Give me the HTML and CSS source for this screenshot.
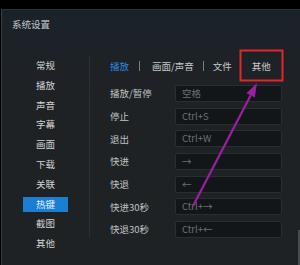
FILE: index.html
```html
<!DOCTYPE html>
<html lang="zh-CN">
<head>
  <meta charset="UTF-8">
  <title>系统设置</title>
  <link rel="stylesheet" href="styles.css">
</head>
<body>
  <div class="window">
    <div class="title">系统设置</div>

    <div class="main">
      <ul class="sidebar">
        <li>常规</li>
        <li>播放</li>
        <li>声音</li>
        <li>字幕</li>
        <li>画面</li>
        <li>下载</li>
        <li>关联</li>
        <li class="active"><span>热键</span></li>
        <li>截图</li>
        <li>其他</li>
      </ul>

      <div class="content">
        <div class="tabs">
          <span class="tab current">播放</span>
          <span class="sep wide"></span>
          <span class="tab">画面/声音</span>
          <span class="sep"></span>
          <span class="tab">文件</span>
          <span class="sep last"></span>
          <span class="tab">其他</span>
        </div>

        <div class="keys">
          <div class="row"><span class="label">播放/暂停</span><span class="key">空格</span></div>
          <div class="row"><span class="label">停止</span><span class="key">Ctrl+S</span></div>
          <div class="row"><span class="label">退出</span><span class="key">Ctrl+W</span></div>
          <div class="row"><span class="label">快进</span><span class="key">→</span></div>
          <div class="row"><span class="label">快退</span><span class="key">←</span></div>
          <div class="row"><span class="label">快进30秒</span><span class="key">Ctrl+→</span></div>
          <div class="row"><span class="label">快退30秒</span><span class="key">Ctrl+←</span></div>
        </div>
      </div>
    </div>

    <div class="scroll-thumb"></div>
  </div>

  <!-- annotation drawn over the screenshot -->
  <svg class="marks" width="300" height="265" viewBox="0 0 300 265">
    <rect x="240.5" y="50.5" width="42" height="30" fill="none" stroke="#e3262b" stroke-width="2"/>
    <line x1="193" y1="206" x2="250.6" y2="95.4" stroke="#9a1fa3" stroke-width="2.2"/>
    <polygon points="257,83 254.8,97.6 246.4,93.2" fill="#9a1fa3"/>
  </svg>
</body>
</html>
```

FILE: styles.css
```css
body {
  margin: 0;
  background: #000;
  font-family: "Noto Sans CJK SC", "Liberation Sans", sans-serif;
  width: 300px;
  height: 265px;
  overflow: hidden;
  position: relative;
}

.window {
  margin: 9px 0 0 1px;
  height: 255px;
  border-top: 1px solid #2c3338;
  border-left: 1px solid #353c42;
  background: linear-gradient(#1a2229 0, #1d2227 45px, #1f2225 90px);
  position: relative;
}

.title {
  padding: 7px 10px 0;
  font-size: 9.5px;
  line-height: 14px;
  color: #c4c7ca;
}

.main {
  display: flex;
  align-items: flex-start;
  padding-top: 25px;
}

.sidebar {
  list-style: none;
  margin: 0;
  padding: 0;
  width: 87px;
  height: 182px;
  border-right: 1px solid #2c2f32;
}
.sidebar li {
  height: 19.8px;
  line-height: 19.8px;
  text-align: center;
  font-size: 9.5px;
  color: #d2d4d6;
}
.sidebar li.active span {
  display: inline-block;
  width: 45px;
  height: 15px;
  line-height: 15px;
  background: #1b7ed3;
  color: #e8f2fb;
}

.content {
  padding-left: 20px;
}

.tabs {
  display: flex;
  align-items: center;
  height: 20px;
  font-size: 9.5px;
  color: #c6c8ca;
}
.tab.current {
  color: #2a8ae0;
}
.sep {
  width: 1px;
  height: 10px;
  background: #7b7e81;
  margin: 0 9px;
}
.sep.wide {
  margin: 0 12px 0 10px;
}
.sep.last {
  margin: 0 11px 0 8px;
}

.keys {
  margin-top: 6px;
}
.row {
  display: flex;
  align-items: center;
  height: 22.7px;
}
.label {
  width: 65px;
  font-size: 9.5px;
  color: #bfc2c4;
}
.key {
  box-sizing: border-box;
  width: 107px;
  height: 17px;
  line-height: 15px;
  padding-left: 6px;
  background: #131618;
  border: 1px solid #2a2e31;
  border-radius: 2px;
  font-size: 9.5px;
  color: #6c7073;
}

.scroll-thumb {
  position: absolute;
  right: 0;
  top: 220px;
  width: 2px;
  height: 40px;
  background: #4a4d50;
}

.marks {
  position: absolute;
  left: 0;
  top: 0;
  pointer-events: none;
}
```
